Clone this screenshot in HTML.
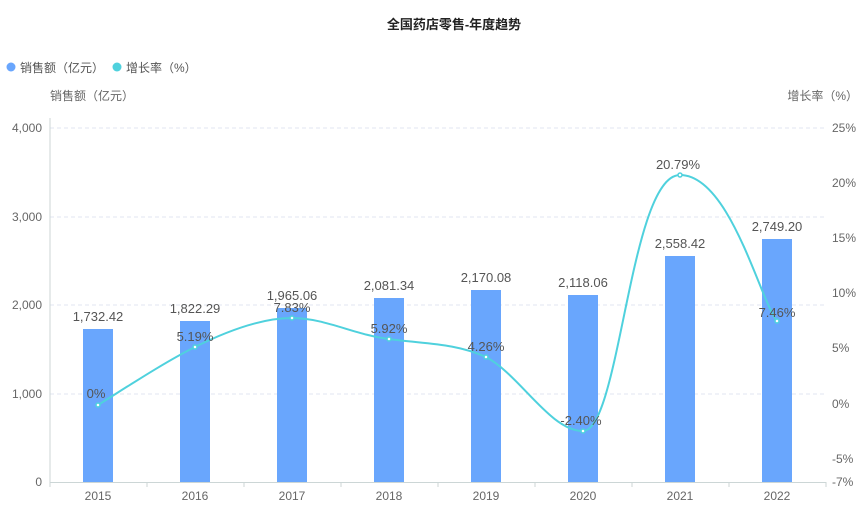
<!DOCTYPE html>
<html><head><meta charset="utf-8"><style>
body{margin:0;background:#fff;width:862px;height:507px;overflow:hidden;font-family:"Liberation Sans","Noto Sans CJK SC",sans-serif}
</style></head><body>
<svg width="862" height="507" xmlns="http://www.w3.org/2000/svg" font-family="Liberation Sans, Noto Sans CJK SC, sans-serif">
<text x="454" y="29" text-anchor="middle" font-size="13" font-weight="bold" fill="#222">全国药店零售-年度趋势</text>
<circle cx="11" cy="67" r="4.5" fill="#69a6fd"/>
<text x="20" y="72" font-size="12" fill="#555">销售额（亿元）</text>
<circle cx="117" cy="67" r="4.5" fill="#4fd1dd"/>
<text x="126" y="72" font-size="12" fill="#555">增长率（%）</text>
<text x="50" y="100" font-size="12" fill="#666">销售额（亿元）</text>
<text x="858" y="100" font-size="12" fill="#666" text-anchor="end">增长率（%）</text>
<g stroke="#e0e6f1" stroke-dasharray="4,3">
<line x1="50" y1="128" x2="826" y2="128"/><line x1="50" y1="217" x2="826" y2="217"/>
<line x1="50" y1="305" x2="826" y2="305"/><line x1="50" y1="394" x2="826" y2="394"/>
</g>
<line x1="50" y1="118" x2="50" y2="482" stroke="#ccd6d6"/>
<line x1="50" y1="482.5" x2="826" y2="482.5" stroke="#ccd6d6"/>
<g stroke="#ccd6d6"><line x1="50" y1="482" x2="50" y2="487"/><line x1="147" y1="482" x2="147" y2="487"/><line x1="244" y1="482" x2="244" y2="487"/><line x1="341" y1="482" x2="341" y2="487"/><line x1="438" y1="482" x2="438" y2="487"/><line x1="535" y1="482" x2="535" y2="487"/><line x1="632" y1="482" x2="632" y2="487"/><line x1="729" y1="482" x2="729" y2="487"/><line x1="826" y1="482" x2="826" y2="487"/></g>
<g font-size="12" fill="#666" text-anchor="end">
<text x="42" y="132">4,000</text><text x="42" y="221">3,000</text><text x="42" y="309">2,000</text><text x="42" y="398">1,000</text><text x="42" y="486">0</text>
</g>
<g font-size="12" fill="#666">
<text x="832" y="132">25%</text><text x="832" y="187">20%</text><text x="832" y="242">15%</text><text x="832" y="297">10%</text><text x="832" y="352">5%</text><text x="832" y="408">0%</text><text x="832" y="463">-5%</text><text x="832" y="486">-7%</text>
</g>
<g font-size="12" fill="#666" text-anchor="middle">
<text x="98" y="500">2015</text><text x="195" y="500">2016</text><text x="292" y="500">2017</text><text x="389" y="500">2018</text><text x="486" y="500">2019</text><text x="583" y="500">2020</text><text x="680" y="500">2021</text><text x="777" y="500">2022</text>
</g>
<g fill="#69a6fd">
<rect x="83" y="329" width="30" height="153"/><rect x="180" y="321" width="30" height="161"/><rect x="277" y="308" width="30" height="174"/><rect x="374" y="298" width="30" height="184"/><rect x="471" y="290" width="30" height="192"/><rect x="568" y="295" width="30" height="187"/><rect x="665" y="256" width="30" height="226"/><rect x="762" y="239" width="30" height="243"/>
</g>
<g font-size="13" fill="#555" text-anchor="middle">
<text x="98" y="321">1,732.42</text><text x="195" y="313">1,822.29</text><text x="292" y="300">1,965.06</text><text x="389" y="290">2,081.34</text><text x="486" y="282">2,170.08</text><text x="583" y="287">2,118.06</text><text x="680" y="248">2,558.42</text><text x="777" y="231">2,749.20</text>
</g>
<path d="M98,405 C130,385 165,362 195,347 C225,332 260,318 292,318 C325,318 355,335 389,339 C425,344 455,343 486,357 C520,375 550,431 583,431 C620,431 630,175 680,175 C730,175 760,300 777,321" fill="none" stroke="#4fd1dd" stroke-width="2"/>
<g fill="#fff" stroke="#4fd1dd" stroke-width="1.5">
<circle cx="98" cy="405" r="2"/><circle cx="195" cy="347" r="2"/><circle cx="292" cy="318" r="2"/><circle cx="389" cy="339" r="2"/><circle cx="486" cy="357" r="2"/><circle cx="583" cy="431" r="2"/><circle cx="680" cy="175" r="2"/><circle cx="777" cy="321" r="2"/>
</g>
<g font-size="13" fill="#555" text-anchor="middle">
<text x="96" y="398">0%</text><text x="195" y="341">5.19%</text><text x="292" y="312">7.83%</text><text x="389" y="333">5.92%</text><text x="486" y="351">4.26%</text><text x="581" y="425">-2.40%</text><text x="678" y="169">20.79%</text><text x="777" y="317">7.46%</text>
</g>
</svg>
</body></html>
